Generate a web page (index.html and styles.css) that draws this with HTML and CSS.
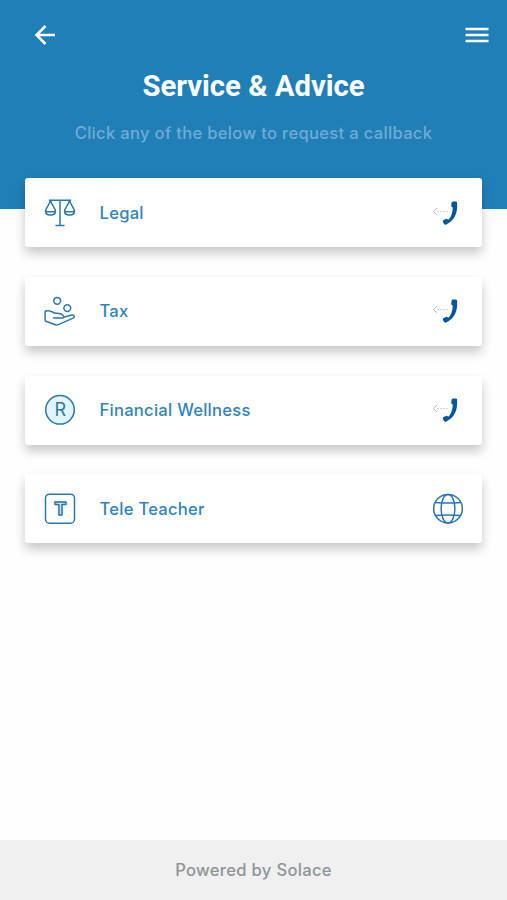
FILE: index.html
```html
<!DOCTYPE html>
<html lang="en">
<head>
    <meta charset="UTF-8">
    <meta name="viewport" content="width=device-width, initial-scale=1.0">
    <title>Service &amp; Advice</title>
    <link rel="stylesheet" href="styles.css">
</head>
<body>
    <header class="header">
        <nav class="nav">
            <svg class="back" width="22" height="22" viewBox="0 0 22 22">
                <path d="M11.5 2 2.5 11l9 9M2.5 11H21" />
            </svg>
            <svg class="menu" width="24" height="18" viewBox="0 0 24 18">
                <path d="M.5 3h23M.5 9h23M.5 15h23" />
            </svg>
        </nav>
        <h1>Service &amp; Advice</h1>
        <p>Click any of the below to request a callback</p>
    </header>

    <main class="services">
        <div class="card">
            <svg class="icon" width="32" height="32" viewBox="0 0 32 32">
                <path d="M5.5 3.3h21M16 3.3v25.2M12 28.5h8" />
                <path d="M6.5 3.5C5.500 8 1.5 11 1.5 14.5c0 2.3 2 3.5 5 3.500s5-1.2 5-3.500C11.5 11 7.500 8 6.5 3.500zM1.800 14.800h9.500M25.500 3.500c-1 4.500-5 7.500-5 11 0 2.300 2 3.500 5 3.500s5-1.200 5-3.500c0-3.500-4-6.500-5-11zM20.800 14.800h9.500" />
            </svg>
            <span>Legal</span>
            <svg class="phone" width="32" height="32" viewBox="0 0 32 32">
                <path class="dots" d="M5 14.5h11" />
                <path class="arrow" d="M5 11 1.500 14.500 5 18" />
                <path class="handset" d="M19.500 6q0-1.500 1.500-1.500h2.800q1.200 0 1.300 1.200c.7 10-2.200 17.600-10.900 21.800q-1.300.6-2.100-.6l-1.200-2q-.5-1.300.8-2l2.200-1q1.200-.4 2 .5l.4.4q4.200-4.300 4.500-12.400l-.6-.2q-1-.3-.9-1.300z" />
            </svg>
        </div>
        <div class="card">
            <svg class="icon" width="32" height="32" viewBox="0 0 32 32">
                <circle cx="13.200" cy="5.800" r="3.400" />
                <circle cx="23.300" cy="13.100" r="3.400" />
                <path d="M9.500 23h8.700c2 0 2-1.600.8-2.800-1.600-1.700-3.500-2-6.500-1.900-2.500 0-3.500-1-5.300-1.900-1.500-.7-3.400-.8-5.400-.4q-.7.2-.7.900v8.200q0 .8.800 1.100l9.600 3.500q1.400.5 2.800-.1l14.800-6.500c2.200-1 1.400-3.400-1-3l-8 1.800" />
            </svg>
            <span>Tax</span>
            <svg class="phone" width="32" height="32" viewBox="0 0 32 32">
                <path class="dots" d="M5 14.5h11" />
                <path class="arrow" d="M5 11 1.500 14.500 5 18" />
                <path class="handset" d="M19.500 6q0-1.500 1.500-1.500h2.800q1.200 0 1.300 1.200c.7 10-2.200 17.600-10.900 21.800q-1.300.6-2.100-.6l-1.200-2q-.5-1.300.8-2l2.200-1q1.200-.4 2 .5l.4.4q4.200-4.300 4.500-12.400l-.6-.2q-1-.3-.9-1.300z" />
            </svg>
        </div>
        <div class="card">
            <svg class="icon" width="32" height="32" viewBox="0 0 32 32">
                <circle class="coin" cx="16" cy="15.800" r="14.300" />
                <text class="coin-letter" x="16.300" y="22.300">R</text>
            </svg>
            <span>Financial Wellness</span>
            <svg class="phone" width="32" height="32" viewBox="0 0 32 32">
                <path class="dots" d="M5 14.5h11" />
                <path class="arrow" d="M5 11 1.500 14.500 5 18" />
                <path class="handset" d="M19.500 6q0-1.500 1.500-1.500h2.800q1.200 0 1.300 1.200c.7 10-2.200 17.600-10.900 21.800q-1.300.6-2.100-.6l-1.200-2q-.5-1.300.8-2l2.200-1q1.200-.4 2 .5l.4.4q4.200-4.300 4.500-12.400l-.6-.2q-1-.3-.9-1.300z" />
            </svg>
        </div>
        <div class="card">
            <svg class="icon" width="32" height="32" viewBox="0 0 32 32">
                <rect x="1.500" y="1.200" width="29" height="29" rx="4" />
                <text class="box-letter" x="16.300" y="22.300">T</text>
            </svg>
            <span>Tele Teacher</span>
            <svg class="globe" width="32" height="32" viewBox="0 0 32 32">
                <circle cx="16" cy="15.700" r="14.300" />
                <ellipse cx="16" cy="15.700" rx="6.900" ry="14.300" />
                <path d="M3.500 9.500q12.500 1.200 25 0M3.500 22.600q12.500-1.200 25 0" />
            </svg>
        </div>
    </main>

    <footer class="footer">Powered by Solace</footer>
</body>
</html>
```

FILE: styles.css
```css
:root {
    --blue: #207fb7;
    --icon-color: #2c76ae;
    --label-color: #3084bc;
    --phone-color: #07579a;
}

* {
    box-sizing: border-box;
}

body {
    display: flex;
    flex-direction: column;
    height: 100vh;
    margin: 0;
    background: #fefefe;
    font-family: Inter, "Liberation Sans", sans-serif;
}

.header {
    height: 208.5px;
    padding: 24px 18px 0 34px;
    background: var(--blue);
    color: white;
}

.nav {
    display: flex;
    justify-content: space-between;
    align-items: center;
    height: 22px;
}

.back,
.menu {
    fill: none;
    stroke: white;
    stroke-width: 2.5;
}

h1 {
    margin: 23px -18px 0 -34px;
    font-family: Roboto, sans-serif;
    font-size: 29.3px;
    line-height: 35px;
    font-weight: 700;
    text-align: center;
}

.header p {
    margin: 18px -18px 0 -34px;
    font-size: 16.6px;
    line-height: 22px;
    font-weight: 500;
    letter-spacing: 0.3px;
    color: #6facd3;
    text-align: center;
}

.services {
    display: flex;
    flex-direction: column;
    flex: 1;
    gap: 29.8px;
    margin-top: -30.5px;
    padding: 0 25px;
}

.card {
    display: flex;
    align-items: center;
    gap: 23.5px;
    height: 69px;
    padding: 0 18.5px 0 19px;
    background: white;
    border-radius: 3px;
    box-shadow: 0 6px 11px rgba(0, 0, 0, 0.22);
}

.card span {
    flex: 1;
    font-size: 16.6px;
    font-weight: 500;
    letter-spacing: 0.25px;
    color: var(--label-color);
}

.icon,
.globe {
    fill: none;
    stroke: var(--icon-color);
    stroke-width: 1.5;
    stroke-linejoin: round;
    stroke-linecap: round;
}

.coin {
    fill: #e2f4fd;
}

.coin-letter {
    fill: var(--icon-color);
    stroke: none;
    font-size: 18px;
    text-anchor: middle;
}

.box-letter {
    fill: #d5ebf8;
    font-size: 18px;
    font-weight: 800;
    text-anchor: middle;
}

.handset {
    fill: var(--phone-color);
}

.arrow,
.dots {
    fill: none;
    stroke: #b5bbc0;
}

.dots {
    stroke: #d3d7da;
    stroke-dasharray: 2 1;
}

.footer {
    height: 60px;
    background: #f0f0f0;
    color: #8e9495;
    font-size: 16.6px;
    line-height: 60px;
    font-weight: 500;
    letter-spacing: 0.3px;
    text-align: center;
}
```
